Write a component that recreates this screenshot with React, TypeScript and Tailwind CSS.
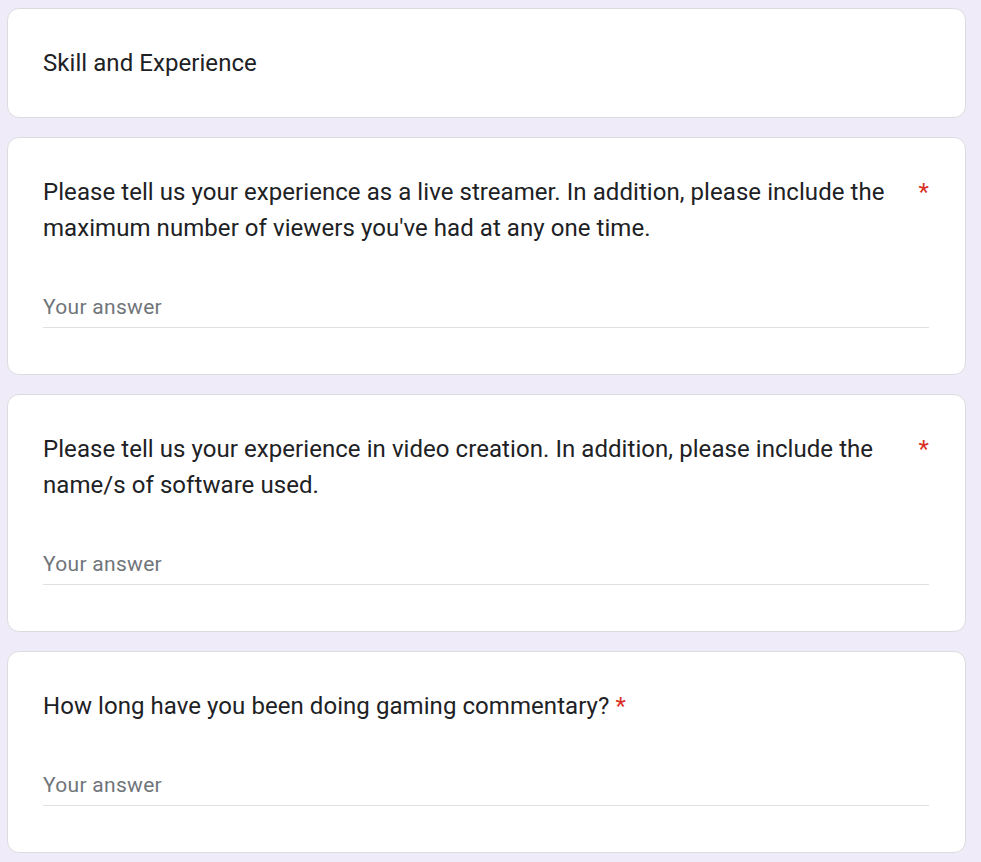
const QUESTIONS = [
  {
    id: 'stream',
    text: "Please tell us your experience as a live streamer. In addition, please include the maximum number of viewers you've had at any one time.",
  },
  {
    id: 'video',
    text: 'Please tell us your experience in video creation. In addition, please include the name/s of software used.',
  },
  {
    id: 'commentary',
    text: 'How long have you been doing gaming commentary?',
  },
];

function QuestionCard({ text }: { text: string }) {
  return (
    <div className="bg-white border border-[#dadce0] rounded-[12px] pl-[35px] pr-[36px] pt-[36px] pb-[46px]">
      <div className="flex text-[24px] leading-[36px] tracking-[0.06px] text-[#202124]">
        <span>{text}</span>
        <span className="pl-[6px] text-[#d93025]">*</span>
      </div>
      <div className="mt-[47px] pb-[6px] border-b border-[#e0e0e0]">
        <input
          placeholder="Your answer"
          className="w-full h-[28px] text-[21px] leading-[28px] tracking-[0.3px] text-[#202124] placeholder:text-[#70757a] outline-none bg-transparent"
        />
      </div>
    </div>
  );
}

export default function App() {
  return (
    <div className="min-h-screen bg-[#f0ebf8] pt-[8px] pl-[7px] pb-[20px]" style={{ fontFamily: 'Roboto, "Liberation Sans", sans-serif' }}>
      <div className="w-[959px] flex flex-col gap-[19px]">
        <div className="bg-white border border-[#dadce0] rounded-[12px] pl-[35px] pr-[36px] py-[36px]">
          <h2 className="text-[24px] leading-[36px] tracking-[0.06px] text-[#202124]">Skill and Experience</h2>
        </div>
        {QUESTIONS.map((q) => (
          <QuestionCard key={q.id} text={q.text} />
        ))}
      </div>
    </div>
  );
}
